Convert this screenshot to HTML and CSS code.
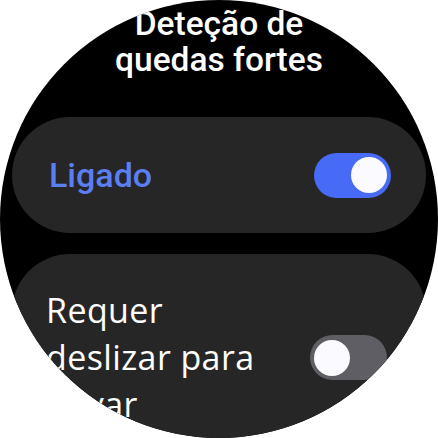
FILE: index.html
```html
<!DOCTYPE html>
<html lang="pt">
<head>
<meta charset="utf-8">
<link rel="stylesheet" href="styles.css">
</head>
<body>
<div class="watch">
  <h1 class="title">Deteção de<br>quedas fortes</h1>
  <div class="card card-on">
    <span class="label label-on">Ligado</span>
    <span class="toggle toggle-on"><span class="thumb"></span></span>
  </div>
  <div class="card card-off">
    <span class="label label-off">Requer deslizar para ativar</span>
    <span class="toggle toggle-off"><span class="thumb"></span></span>
  </div>
</div>
</body>
</html>
```

FILE: styles.css
```css
html, body {
  margin: 0;
  padding: 0;
  background: #ffffff;
}

.watch {
  width: 438px;
  height: 438px;
  border-radius: 50%;
  overflow: hidden;
  background: #000000;
  font-family: Roboto, "Noto Sans", sans-serif;
  color: #ffffff;
  display: flex;
  flex-direction: column;
  align-items: center;
}

.title {
  margin: 6px 0 0 0;
  font-size: 33.5px;
  line-height: 36px;
  font-weight: 500;
  text-align: center;
  color: #ffffff;
}

.card {
  box-sizing: border-box;
  width: 414px;
  flex-shrink: 0;
  background: #262626;
  border-radius: 58px;
  display: flex;
  align-items: center;
  justify-content: space-between;
}

.card-on {
  margin-top: 39px;
  height: 116px;
  padding: 0 35px 0 37px;
}

.card-off {
  margin-top: 21px;
  padding: 33px 39px 32px 34px;
}

.label-on {
  font-size: 34px;
  color: #5b7ff2;
  font-weight: 500;
  line-height: 40px;
}

.label-off {
  font-family: "Open Sans", Roboto, sans-serif;
  font-size: 34px;
  letter-spacing: 0.4px;
  color: #ffffff;
  font-weight: 400;
  line-height: 47px;
  width: 226px;
}

.toggle {
  box-sizing: border-box;
  width: 77px;
  height: 45px;
  border-radius: 23px;
  padding: 4px;
  display: flex;
  align-items: center;
  flex-shrink: 0;
}

.toggle-on {
  background: #476bf6;
  justify-content: flex-end;
}

.toggle-off {
  background: #5f5e64;
  justify-content: flex-start;
}

.thumb {
  width: 36px;
  height: 36px;
  border-radius: 50%;
  background: #fbfbff;
}
```
